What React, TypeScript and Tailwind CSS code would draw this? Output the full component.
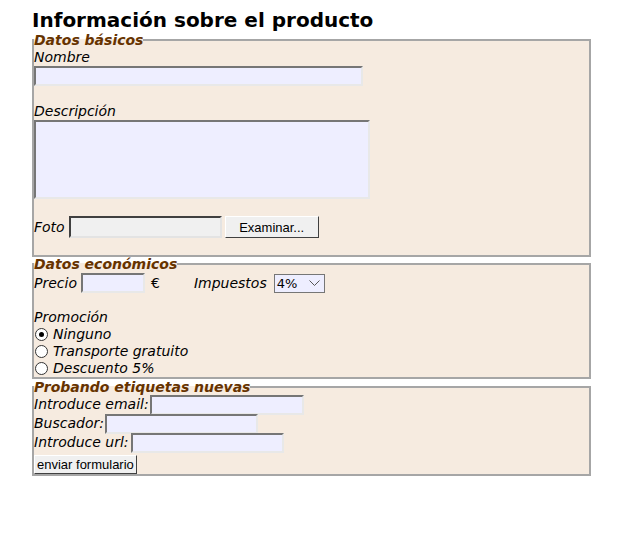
const inputCls =
  "block h-[20px] bg-[#eeeeff] border-2 border-t-[#767676] border-l-[#767676] border-b-[#e8e8e8] border-r-[#e8e8e8]";

const Radio = ({ checked, label }: { checked?: boolean; label: string }) => (
  <div className="flex items-center h-[17px]">
    <span className="flex items-center justify-center size-[13px] rounded-full border border-[#333] bg-white mr-[5px] ml-[1px]">
      {checked && <span className="size-[5px] rounded-full bg-black" />}
    </span>
    <span>{label}</span>
  </div>
);

const App = () => {
  return (
    <div className="w-[631px] h-[535px] bg-white font-['DejaVu_Sans',Verdana,sans-serif] text-black">
      <div className="pl-8 w-[591px] pt-[8px]">
        <h1 className="text-[20px] font-bold leading-[24px]">Información sobre el producto</h1>
        <form className="flex flex-col">
          {/* datos basicos */}
          <fieldset className="border-2 border-[#a6a6a6] bg-[#f6ebe0] pb-[17px] text-[14px] italic leading-[17px]">
            <legend className="font-bold text-[14px] text-[#663300] leading-[16px]">Datos básicos</legend>
            <div className="pt-[1px]">Nombre</div>
            <input type="text" className={inputCls + " w-[329px]"} />
            <div className="h-[17px]" />
            <div>Descripción</div>
            <textarea className="block w-[336px] h-[79px] resize-none bg-[#eeeeff] border-2 border-t-[#767676] border-l-[#767676] border-b-[#e8e8e8] border-r-[#e8e8e8]" />
            <div className="h-[17px]" />
            <div className="flex items-center">
              <span className="mr-[4px]">Foto</span>
              <span className="block w-[153px] h-[22px] bg-[#f0f0f0] border-2 border-t-[#404040] border-l-[#404040] border-b-[#e3e3e3] border-r-[#e3e3e3]" />
              <button type="button" className="ml-[3px] w-[94px] h-[22px] bg-[#f0f0f0] border border-t-white border-l-white border-b-[#404040] border-r-[#404040] not-italic font-['Liberation_Sans',Arial,sans-serif] text-[13px]">
                Examinar...
              </button>
            </div>
          </fieldset>

          {/* datos economicos */}
          <fieldset className="-mt-[1px] border-2 border-[#a6a6a6] bg-[#f6ebe0] text-[14px] italic leading-[17px]">
            <legend className="font-bold text-[14px] text-[#663300] leading-[16px]">Datos económicos</legend>
            <div className="flex items-center h-[20px] mt-[1px]">
              <span className="mr-[4px]">Precio</span>
              <input type="text" className={inputCls + " w-[64px]"} />
              <span className="ml-[6px] not-italic">€</span>
              <span className="ml-[34px] mr-[7px]">Impuestos</span>
              <span className="flex items-center justify-between w-[51px] h-[19px] bg-[#eeeeff] border border-[#767676] pl-[2px] pr-[4px] not-italic text-[13px]">
                4%
                <svg width="11" height="6" viewBox="0 0 11 6" fill="none" stroke="#555" strokeWidth="1">
                  <path d="M0.5 0.5 L5.5 5.5 L10.5 0.5" />
                </svg>
              </span>
            </div>
            <div className="h-[16px]" />
            <div>Promoción</div>
            <Radio checked label="Ninguno" />
            <Radio label="Transporte gratuito" />
            <Radio label="Descuento 5%" />
          </fieldset>

          {/* nuevas */}
          <fieldset className="border-2 border-[#a6a6a6] bg-[#f6ebe0] text-[14px] italic leading-[17px]">
            <legend className="font-bold text-[14px] text-[#663300] leading-[16px]">Probando etiquetas nuevas</legend>
            <div className="flex items-center h-[19px]">
              <span>Introduce email:</span>
              <input type="email" className={inputCls + " ml-[1px] w-[154px] h-[19px]"} />
            </div>
            <div className="flex items-center h-[19px]">
              <span>Buscador:</span>
              <input type="search" className={inputCls + " ml-[1px] w-[153px] h-[19px]"} />
            </div>
            <div className="flex items-center h-[19px]">
              <span>Introduce url:</span>
              <input type="url" className={inputCls + " ml-[2px] w-[153px] h-[19px]"} />
            </div>
            <button type="button" className="block mt-[3px] h-[19px] px-[2px] bg-[#f0f0f0] border border-t-white border-l-white border-b-[#404040] border-r-[#404040] not-italic font-['Liberation_Sans',Arial,sans-serif] text-[13px] leading-[15px]">
              enviar formulario
            </button>
          </fieldset>
        </form>
      </div>
    </div>
  );
};

export default App;
